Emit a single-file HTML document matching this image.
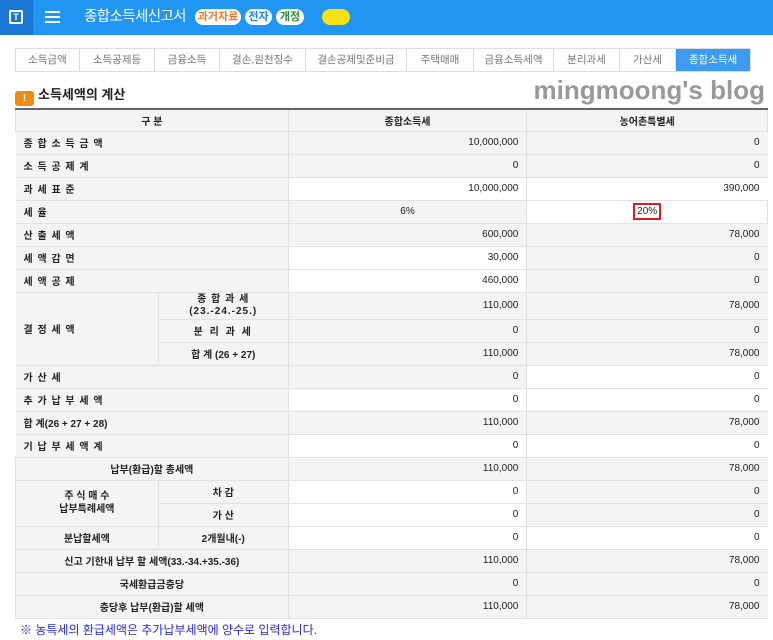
<!DOCTYPE html>
<html><head><meta charset="utf-8"><style>
*{margin:0;padding:0;box-sizing:border-box}
body{width:773px;height:640px;overflow:hidden;background:#fff;font-family:"Liberation Sans","Noto Sans CJK KR",sans-serif;position:relative}
.hdr{position:absolute;left:0;top:0;width:773px;height:35px;background:#2196f3}
.logo{position:absolute;left:0;top:0;width:33px;height:35px;background:#1976d2}
.logo div{position:absolute;left:9px;top:10px;width:14px;height:14px;border:2px solid #fff;border-radius:2px;color:#fff;font-size:9px;font-weight:bold;text-align:center;line-height:10px}
.menu{position:absolute;left:45px;top:11px;width:15px;height:2px;background:#fff;box-shadow:0 5px 0 #fff,0 10px 0 #fff}
.title{position:absolute;left:84px;top:6px;color:#fff;font-size:14.5px;line-height:22px;letter-spacing:-0.6px}
.pill{position:absolute;top:9px;height:16px;border-radius:8px;background:#fff;font-size:11px;line-height:16px;text-align:center;font-weight:bold}
.yel{position:absolute;left:322px;top:9px;width:28px;height:16px;border-radius:8px;background:#f5e216}
.tabs{position:absolute;left:15px;top:48px;height:24px;display:flex;border:1px solid #ddd}
.tabs div{height:22px;border-right:1px solid #ddd;font-size:10.5px;color:#777;text-align:center;line-height:22px}
.tabs div.on{background:#3d9cf0;color:#fff;border-right:none}
.sec{position:absolute;left:15px;top:84px;font-size:13px;font-weight:bold;color:#222}
.sec i{display:inline-block;width:19px;height:15px;border-radius:3px;background:#f08a12;color:#fff;font-style:normal;font-size:10px;text-align:center;line-height:15px;vertical-align:-2px;margin-right:4px}
.blog{position:absolute;right:8px;top:75px;font-size:26px;font-weight:bold;color:#999}
table{position:absolute;left:15px;top:108px;width:753px;border-collapse:collapse;border-top:2px solid #666;font-size:10px;color:#222}
td{border:1px solid #e2e2e2;height:23px;padding:0 8px;background:#f4f4f4}
td.w{background:#fff}
td.l{font-weight:bold;letter-spacing:1px;border-left:none}
td.c{text-align:center;font-weight:bold}
td.r{text-align:right;border-right:none}
td.v{text-align:right}
th{height:22px;border:1px solid #e2e2e2;background:#f4f4f4;font-size:10px}
.note{position:absolute;left:20px;top:621px;color:#2a2ad8;font-size:12px}
.red{display:inline-block;border:2px solid #d9201f;padding:1px 2px}
</style></head><body>
<div class="hdr"><div class="logo"><div>T</div></div><div class="menu"></div>
<div class="title">종합소득세신고서</div>
<div class="pill" style="left:195px;width:46px;color:#e57a2a">과거자료</div>
<div class="pill" style="left:245px;width:27px;color:#1e88e5">전자</div>
<div class="pill" style="left:276px;width:28px;color:#2e8b3a">개정</div>
<div class="yel"></div></div>
<div class="tabs">
<div style="width:64px">소득금액</div><div style="width:75px">소득공제등</div><div style="width:65px">금융소득</div><div style="width:86px">결손,원천징수</div><div style="width:101px">결손공제및준비금</div><div style="width:67px">주택매매</div><div style="width:80px">금융소득세액</div><div style="width:66px">분리과세</div><div style="width:56px">가산세</div><div class="on" style="width:74px">종합소득세</div></div>
<div class="sec"><i>!</i>소득세액의 계산</div>
<div class="blog">mingmoong's blog</div>
<table>
<colgroup><col style="width:143px"><col style="width:130px"><col style="width:239px"><col style="width:241px"></colgroup>
<tr><th colspan="2">구 분</th><th>종합소득세</th><th>농어촌특별세</th></tr>
<tr><td class="l" colspan="2">종 합 소 득 금 액</td><td class="v">10,000,000</td><td class="r">0</td></tr>
<tr><td class="l" colspan="2">소 득 공 제 계</td><td class="v">0</td><td class="r">0</td></tr>
<tr><td class="l" colspan="2">과 세 표 준</td><td class="v w">10,000,000</td><td class="r w">390,000</td></tr>
<tr><td class="l" colspan="2">세 율</td><td style="text-align:center">6%</td><td class="w" style="text-align:center;padding:0"><span class="red">20%</span></td></tr>
<tr><td class="l" colspan="2">산 출 세 액</td><td class="v">600,000</td><td class="r">78,000</td></tr>
<tr><td class="l" colspan="2">세 액 감 면</td><td class="v w">30,000</td><td class="r">0</td></tr>
<tr><td class="l" colspan="2">세 액 공 제</td><td class="v w">460,000</td><td class="r">0</td></tr>
<tr><td class="l" rowspan="3">결 정 세 액</td><td class="c" style="height:27px;line-height:12px;letter-spacing:1px">종 합 과 세<br>(23.-24.-25.)</td><td class="v">110,000</td><td class="r">78,000</td></tr>
<tr><td class="c" style="letter-spacing:2px">분 리 과 세</td><td class="v">0</td><td class="r">0</td></tr>
<tr><td class="c">합 계 (26 + 27)</td><td class="v">110,000</td><td class="r">78,000</td></tr>
<tr><td class="l" colspan="2">가 산 세</td><td class="v">0</td><td class="r w">0</td></tr>
<tr><td class="l" colspan="2">추 가 납 부 세 액</td><td class="v w">0</td><td class="r w">0</td></tr>
<tr><td class="l" colspan="2" style="letter-spacing:0">합 계(26 + 27 + 28)</td><td class="v">110,000</td><td class="r">78,000</td></tr>
<tr><td class="l" colspan="2">기 납 부 세 액 계</td><td class="v w">0</td><td class="r w">0</td></tr>
<tr><td class="c" colspan="2">납부(환급)할 총세액</td><td class="v">110,000</td><td class="r">78,000</td></tr>
<tr><td class="c" rowspan="2" style="line-height:13px">주 식 매 수<br>납부특례세액</td><td class="c">차 감</td><td class="v w">0</td><td class="r">0</td></tr>
<tr><td class="c">가 산</td><td class="v w">0</td><td class="r">0</td></tr>
<tr><td class="c">분납할세액</td><td class="c">2개월내(-)</td><td class="v w">0</td><td class="r w">0</td></tr>
<tr><td class="c" colspan="2">신고 기한내 납부 할 세액(33.-34.+35.-36)</td><td class="v">110,000</td><td class="r">78,000</td></tr>
<tr><td class="c" colspan="2">국세환급금충당</td><td class="v">0</td><td class="r">0</td></tr>
<tr><td class="c" colspan="2">충당후 납부(환급)할 세액</td><td class="v">110,000</td><td class="r">78,000</td></tr>
</table>
<div class="note">※ 농특세의 환급세액은 추가납부세액에 양수로 입력합니다.</div>
</body></html>
